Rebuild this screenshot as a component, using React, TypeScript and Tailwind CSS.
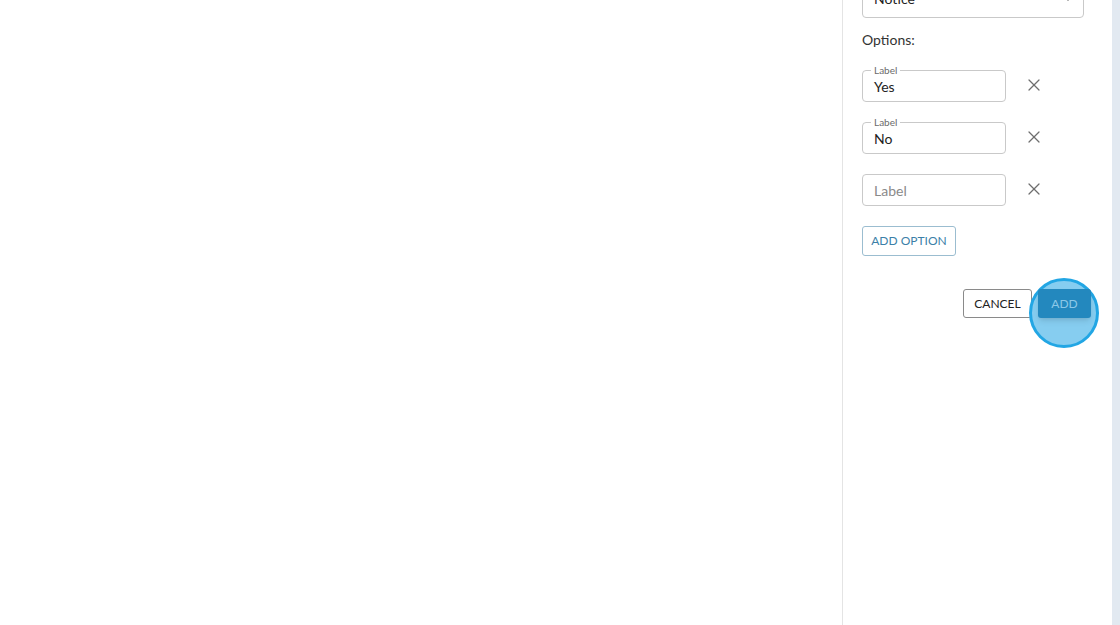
import React from 'react';
import { X } from 'lucide-react';

const font = { fontFamily: 'Lato, "Open Sans", Arial, sans-serif' };

interface OptionRowProps {
  value?: string;
}

const OptionRow: React.FC<OptionRowProps> = ({ value }) => (
  <div className="flex items-center">
    <div className="relative w-[144px] h-[32px] rounded border border-[#c9c9c9] flex items-center px-[11px]">
      {value && (
        <span className="absolute -top-[8px] left-[8px] px-[3px] bg-white text-[10px] leading-[14px] text-[#6b6b6b]">
          Label
        </span>
      )}
      <span className={value ? 'text-[14px] text-[#222]' : 'text-[14px] text-[#8a8a8a]'}>
        {value || 'Label'}
      </span>
    </div>
    <button className="ml-[18px] w-[20px] h-[20px] -mt-[2px] flex items-center justify-center text-[#6e6e6e]">
      <X size={20} strokeWidth={1.5} />
    </button>
  </div>
);

const App: React.FC = () => {
  return (
    <div className="flex h-[625px] w-full overflow-hidden bg-white" style={font}>
      <div className="flex-1" />
      <div className="w-[270px] border-l border-[#e4e4e4] bg-white pl-[19px] pr-[21px]">
        <div className="-mt-[22px] w-[222px] h-[40px] rounded border border-[#c9c9c9] flex items-center justify-between pl-[11px] pr-[10px]">
          <span className="text-[14px] text-[#222]">Notice</span>
          <svg width="10" height="6" viewBox="0 0 10 6">
            <path d="M0 0 L10 0 L5 6 Z" fill="#555" />
          </svg>
        </div>
        <div className="mt-[12px] text-[14px] leading-[20px] text-[#333]">Options:</div>
        <div className="mt-[20px] flex flex-col gap-[20px]">
          <OptionRow value="Yes" />
          <OptionRow value="No" />
          <OptionRow />
        </div>
        <button className="mt-[20px] h-[30px] w-[94px] rounded-[3px] border border-[#9bbdd0] text-[12px] text-[#3c7fa8] uppercase">
          Add Option
        </button>
        <div className="mt-[33px] flex justify-end gap-[6px]">
          <button className="h-[29px] w-[69px] rounded-[3px] border border-[#8a8a8a] text-[12px] text-[#222] uppercase">
            Cancel
          </button>
          <div className="relative">
            <div className="absolute left-[-9px] top-[-11px] w-[70px] h-[70px] rounded-full border-[3px] border-[#22a6e4] bg-[#86cdf0] pointer-events-none" />
            <button className="relative h-[29px] w-[53px] rounded-[3px] bg-[#2388be] text-[12px] text-[#8cc8e8] uppercase shadow-md">
              Add
            </button>
          </div>
        </div>
      </div>
      <div className="w-[8px] bg-[#e2e9f1]" />
    </div>
  );
};

export default App;
